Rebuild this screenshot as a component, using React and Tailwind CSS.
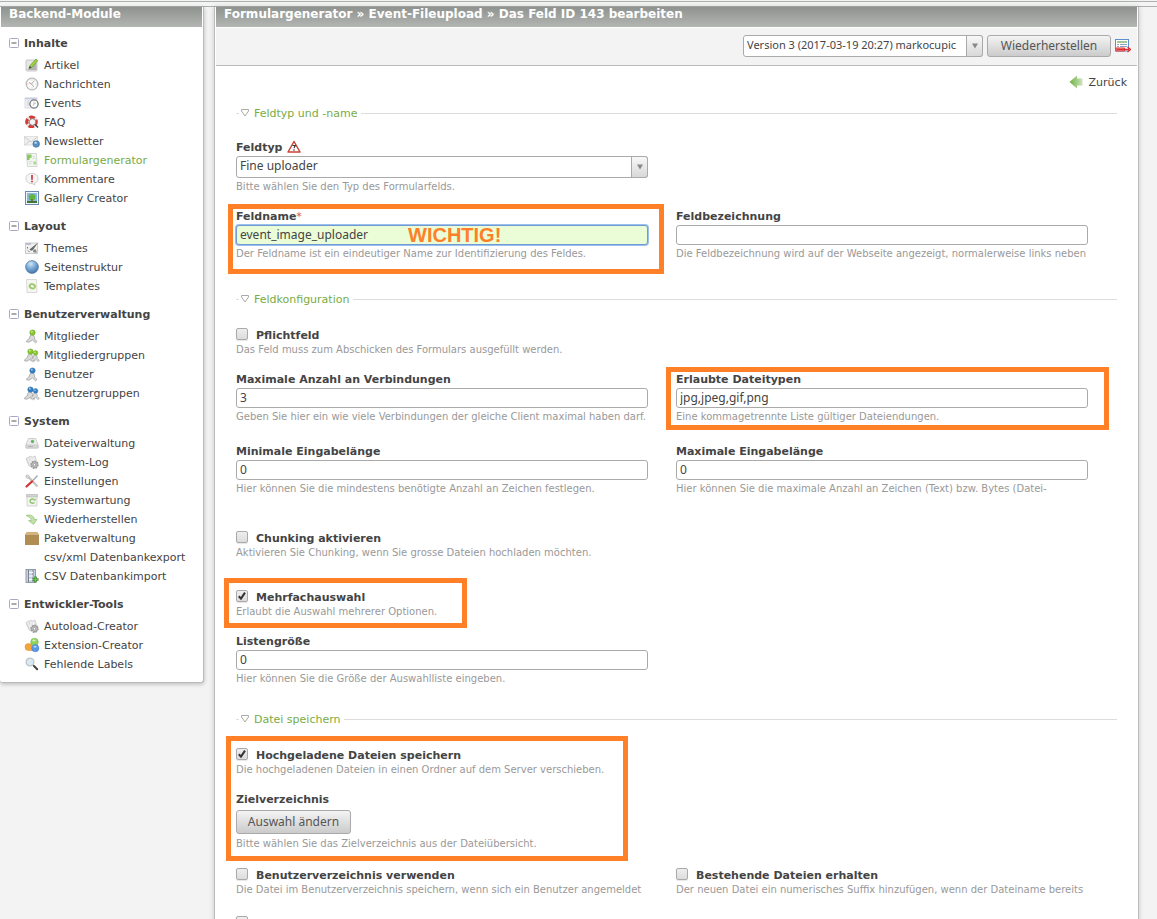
import React from 'react';

function Icon({ children, label }) {
  return (
    <svg viewBox="0 0 16 16" className="h-4 w-4 shrink-0" aria-hidden={label ? undefined : true} aria-label={label}>
      {children}
    </svg>
  );
}

const Person = ({ color, x = 0, dark }) => (
  <g transform={`translate(${x} 0)`}>
    <path d="M8 6.500c2 .5 2.600 2 2.500 4.500l2.500 2.500-1.500 1.300L8.500 12 5 14.200 2.500 13.800c.3-1.800 1.800-2.600 3-3.300C5.600 8.500 6.300 7 8 6.500Z" fill="#dadada" stroke="#9a9a9a" strokeWidth=".7" />
    <circle cx="8.500" cy="4.600" r="2.700" fill={color} stroke={dark} strokeWidth=".5" />
    <circle cx="7.800" cy="3.700" r=".9" fill="#fff" opacity=".6" />
  </g>
);

const Gear = () => (
  <Icon>
    <path d="M2 4.500 7 2l1 1.500L11 2l1.500 5-3 6L5 12Z" fill="#ececec" stroke="#c6c6c6" strokeWidth=".8" />
    <path d="m2.500 5 3 6.500M5 3.500l1 3" stroke="#cfcfcf" strokeWidth=".8" />
    <circle cx="10.500" cy="10.700" r="3.300" fill="#dedede" stroke="#999" strokeWidth="1.800" strokeDasharray="1.700 .8" />
    <circle cx="10.500" cy="10.700" r="2.800" fill="#c9c9c9" stroke="#8c8c8c" strokeWidth=".7" />
    <circle cx="10.500" cy="10.700" r="1.200" fill="#fff" stroke="#777" strokeWidth=".6" />
  </Icon>
);

const icons = {
  artikel: (
    <Icon>
      <rect x="2" y="3" width="11" height="11" rx="1" fill="#e6e6e6" stroke="#bdbdbd" strokeWidth=".8" />
      <path d="M3 13 12.500 5v8Z" fill="#b2b2b2" />
      <path d="m5 11.500 1-3L12 2l1.800 1.500L8 10.200Z" fill="#a0d53c" stroke="#5c8b1d" strokeWidth=".6" />
      <path d="m5 11.500.8-2.400 1.600 1.300Z" fill="#333" />
    </Icon>
  ),
  nachrichten: (
    <Icon>
      <circle cx="8" cy="8" r="5.800" fill="#fbfbfb" stroke="#b9b9b9" strokeWidth="1.300" />
      <path d="M8 3.500v1M8 11.500v1M3.500 8h1M11.500 8h1" stroke="#aaa" strokeWidth=".7" />
      <path d="M10.500 4.500 7.500 8l2.500 3" fill="none" stroke="#9d9d9d" strokeWidth=".8" />
      <path d="m5 6.500 2.500 1.500" stroke="#dc7b70" strokeWidth=".9" />
    </Icon>
  ),
  events: (
    <Icon>
      <rect x="1" y="3" width="12" height="10" fill="#eef0f7" stroke="#d5d8e4" strokeWidth=".8" />
      <path d="M1 3.500h12" stroke="#c6cde2" strokeWidth="1.600" />
      <path d="M3 6h2M3 8h2M3 10h2" stroke="#c4c4c4" strokeWidth=".8" />
      <circle cx="10" cy="9" r="4.100" fill="#fff" stroke="#777" strokeWidth="1.300" />
      <path d="M10 6.500V9l2-1.200M9 11l1-2" fill="none" stroke="#aaa" strokeWidth=".7" />
    </Icon>
  ),
  faq: (
    <Icon>
      <circle cx="7.500" cy="7.800" r="4.700" fill="#fff" stroke="#e8dede" strokeWidth="3.200" />
      <circle cx="7.500" cy="7.800" r="4.700" fill="none" stroke="#d23b35" strokeWidth="3.200" strokeDasharray="5.400 1.983" strokeDashoffset="2.700" />
      <circle cx="8.500" cy="8" r="3.300" fill="#f4f4f4" stroke="#8a8a8a" strokeWidth="1" />
      <path d="m10.800 10.300 3.200 3.200" stroke="#444" strokeWidth="1.600" />
    </Icon>
  ),
  newsletter: (
    <Icon>
      <rect x=".5" y="3.500" width="13" height="8.500" fill="#f0f0f0" stroke="#dadada" strokeWidth=".8" />
      <path d="m.5 4 6.500 5 6.500-5M1 12l4.500-4M13 12 9 8" fill="none" stroke="#c9c9c9" strokeWidth=".9" />
      <circle cx="12.200" cy="11" r="3.300" fill="#568fc0" stroke="#356b9c" strokeWidth=".6" />
      <ellipse cx="11.600" cy="9.700" rx="1.500" ry="1" fill="#b9d8ef" />
    </Icon>
  ),
  formular: (
    <Icon>
      <path d="M2.500 1.500h10l.5 13H3.500Z" fill="#f3f5f1" stroke="#c9cfc5" strokeWidth=".8" />
      <path d="M3 2.500h4.500v3.500H5.500v2H3Z" fill="#8cc765" />
      <path d="M8.500 4.500h2.500M8.500 6.500h3M4.500 9.500h4M4.500 11.500h3" stroke="#d5dfcf" strokeWidth=".9" />
      <path d="M9.500 9.500h2.500v3H9.500Z" fill="#a7d68a" />
    </Icon>
  ),
  kommentare: (
    <Icon>
      <path d="M8 2.500c3.800 0 6 2 6 5 0 2.500-1.500 4-3.500 4.600l.3 2-2.600-1.600C4.500 12.500 2 10.500 2 7.500s2.200-5 6-5Z" fill="#f6f6f6" stroke="#cdcdcd" />
      <path d="M8 4v4.800" stroke="#cf4250" strokeWidth="1.800" />
      <circle cx="8" cy="10.600" r="1" fill="#cf4250" />
    </Icon>
  ),
  gallery: (
    <Icon>
      <rect x="1.500" y="1.500" width="13" height="13" fill="#f0f5fb" stroke="#6c89b0" />
      <rect x="3" y="3" width="10" height="10" fill="#8ab6e3" />
      <path d="M3 11h10v2H3Z" fill="#3f7a2c" />
      <circle cx="8" cy="7.300" r="3.300" fill="#62b53e" />
      <path d="M8 9v3" stroke="#6f5231" strokeWidth="1.200" />
    </Icon>
  ),
  themes: (
    <Icon>
      <rect x="1.500" y="3" width="12" height="10.500" fill="#f0f0f1" stroke="#bfc0c6" strokeWidth=".8" />
      <path d="M2 4h5" stroke="#a9afbf" strokeWidth="1.400" />
      <path d="M3.500 7v1.500M4 10.500l1.500 1.500" stroke="#777" />
      <path d="m5.500 9.500 8.500-7-5 7.500-2 .8Z" fill="#666" />
      <path d="M9 10.500 11.500 9l1.500 3.500H9.500Z" fill="#7f8c83" />
    </Icon>
  ),
  globe: (
    <Icon>
      <defs>
        <radialGradient id="globe" cx=".4" cy=".25" r=".8">
          <stop offset="0" stopColor="#cfe5f6" />
          <stop offset=".5" stopColor="#76a7d3" />
          <stop offset="1" stopColor="#3d6fa3" />
        </radialGradient>
      </defs>
      <circle cx="8" cy="8" r="6.400" fill="url(#globe)" stroke="#48739f" strokeWidth=".7" />
    </Icon>
  ),
  templates: (
    <Icon>
      <path d="M2.500 1.500h10l.5 13H3Z" fill="#f5f6f4" stroke="#d0d2cd" strokeWidth=".8" />
      <ellipse cx="8.300" cy="8.300" rx="2.700" ry="2.100" fill="none" stroke="#9ccb6d" strokeWidth="1.900" transform="rotate(25 8.300 8.300)" />
    </Icon>
  ),
  mitglied: <Icon><Person color="#86c92c" dark="#64971f" /></Icon>,
  mitglieder: (
    <Icon>
      <Person color="#86c92c" dark="#64971f" x={-2} />
      <g transform="translate(3.500 2) scale(.85)"><Person color="#86c92c" dark="#64971f" x={1} /></g>
    </Icon>
  ),
  benutzer: <Icon><Person color="#3480c4" dark="#27629a" /></Icon>,
  benutzergruppe: (
    <Icon>
      <Person color="#3480c4" dark="#27629a" x={-2} />
      <g transform="translate(3.500 2) scale(.85)"><Person color="#3480c4" dark="#27629a" x={1} /></g>
    </Icon>
  ),
  dateien: (
    <Icon>
      <path d="M4.500 3.500h7l2.500 6v3.500H2V9.500Z" fill="#ededed" stroke="#c4c4c4" strokeWidth=".8" />
      <path d="M2 10h12v3H2Z" fill="#d9d9d9" stroke="#bdbdbd" strokeWidth=".6" />
      <circle cx="8.500" cy="6.500" r="1.700" fill="#65b66b" />
      <path d="M4 11.500h5" stroke="#aaa" strokeWidth=".8" />
    </Icon>
  ),
  log: <Gear />,
  tools: (
    <Icon>
      <path d="m3.500 3 10 10.500" stroke="#c4c4c4" strokeWidth="2.400" />
      <path d="M2 2.500 4 2l1.500 2L4 5.500 2 4.500Z" fill="#ddd" stroke="#b2b2b2" strokeWidth=".7" />
      <path d="m13.500 2.500-5 5.500" stroke="#a9a9a9" strokeWidth="1.300" />
      <path d="m8 8.500-5.500 5" stroke="#cf3535" strokeWidth="2.200" strokeLinecap="round" />
    </Icon>
  ),
  wartung: (
    <Icon>
      <path d="M2.500 2.500h11v2.500h-11Z" fill="#d2d6d0" stroke="#b5b8b3" strokeWidth=".7" />
      <path d="M3 5h10v9H3Z" fill="#f1f4ef" stroke="#c6c9c4" strokeWidth=".7" />
      <path d="M10.200 7.500a2.600 2 0 1 0 .3 3" fill="none" stroke="#8dc468" strokeWidth="1.400" />
      <path d="M8.700 8.500h3V6.300Z" fill="#8dc468" />
    </Icon>
  ),
  restore: (
    <Icon>
      <path d="M2 4.500c4-1.300 8 0 8.500 4h2.500l-3.500 5-5-4H7.500C7 7 5 5.800 2 4.500Z" fill="#bfe0a6" stroke="#95c277" strokeWidth=".7" />
    </Icon>
  ),
  paket: (
    <Icon>
      <path d="M2.500 2h11L15 4.500H1Z" fill="#d3b377" />
      <path d="M1 4.500h14V15H1Z" fill="#b08d52" />
    </Icon>
  ),
  leer: <Icon />,
  csv: (
    <Icon>
      <rect x="2" y="1.500" width="9.500" height="13" fill="#c9d2e2" stroke="#7d8797" strokeWidth=".8" />
      <path d="M4.500 2v12M9 2v12" stroke="#6e7686" strokeWidth=".9" />
      <path d="M5 4.500h4M5 8h4M5 11.500h4" stroke="#fff" strokeWidth="1.200" />
      <path d="M11.500 8.500v6M8.500 11.500h6" stroke="#418a31" strokeWidth="2.600" />
      <path d="M11.500 9.200v4.600M9.200 11.500h4.600" stroke="#6cc055" strokeWidth="1.200" />
    </Icon>
  ),
  extension: (
    <Icon>
      <circle cx="10.500" cy="5" r="3.800" fill="#8fd35c" stroke="#6eb13e" strokeWidth=".5" />
      <path d="M4.500 6.500a4 4 0 0 1 4 4v3h-4a3.500 3.500 0 0 1 0-7Z" fill="#f5a63b" stroke="#d98a22" strokeWidth=".5" />
      <circle cx="11.300" cy="11.200" r="3.600" fill="#5a98e6" stroke="#3b78c6" strokeWidth=".5" />
      <ellipse cx="10" cy="3.500" rx="1.700" ry="1" fill="#d6f1c0" />
      <ellipse cx="11" cy="9.700" rx="1.600" ry=".9" fill="#bbd6f7" />
    </Icon>
  ),
  lupe: (
    <Icon>
      <circle cx="6" cy="6" r="3.900" fill="#d9e9f2" stroke="#c0c4c6" strokeWidth="1.300" />
      <path d="m9 9 1.200 1.200" stroke="#999" strokeWidth="1.500" />
      <path d="m10 10 3.200 3.200" stroke="#444" strokeWidth="2" strokeLinecap="round" />
    </Icon>
  ),
};

const groups = [
  ['Inhalte', [['Artikel', 'artikel'], ['Nachrichten', 'nachrichten'], ['Events', 'events'], ['FAQ', 'faq'], ['Newsletter', 'newsletter'], ['Formulargenerator', 'formular'], ['Kommentare', 'kommentare'], ['Gallery Creator', 'gallery']]],
  ['Layout', [['Themes', 'themes'], ['Seitenstruktur', 'globe'], ['Templates', 'templates']]],
  ['Benutzerverwaltung', [['Mitglieder', 'mitglied'], ['Mitgliedergruppen', 'mitglieder'], ['Benutzer', 'benutzer'], ['Benutzergruppen', 'benutzergruppe']]],
  ['System', [['Dateiverwaltung', 'dateien'], ['System-Log', 'log'], ['Einstellungen', 'tools'], ['Systemwartung', 'wartung'], ['Wiederherstellen', 'restore'], ['Paketverwaltung', 'paket'], ['csv/xml Datenbankexport', 'leer'], ['CSV Datenbankimport', 'csv']]],
  ['Entwickler-Tools', [['Autoload-Creator', 'log'], ['Extension-Creator', 'extension'], ['Fehlende Labels', 'lupe']]],
];

function Sidebar() {
  return (
    <aside className="w-51 shrink-0 self-start rounded-b-[3px] border-r border-b border-[#bbb] bg-white pl-px shadow-[0_1px_4px_rgba(0,0,0,0.25)]">
      <h1 className="mr-px h-5 bg-linear-to-b from-[#8f938f] to-[#b3b6b3] pl-2 text-[12px] leading-[14px] font-bold text-white">Backend-Module</h1>
      <nav className="flex flex-col gap-[11px] pt-2 pb-[9px] pl-2">
        {groups.map(([title, items]) => (
          <section key={title}>
            <button type="button" className="flex h-4 items-center gap-[5px] text-[11px] leading-4 font-bold">
              <svg viewBox="0 0 10 10" className="h-2.5 w-2.5" aria-hidden>
                <rect x=".5" y=".5" width="9" height="9" rx="1" fill="#fff" stroke="#aaa9c4" />
                <path d="M2.500 5h5" stroke="#555" />
              </svg>
              <span className="pt-0.5">{title}</span>
            </button>
            <ul className="mt-1">
              {items.map(([name, icon]) => (
                <li key={name}>
                  <a href="#" className={`flex h-[19px] items-center gap-1 pl-[15px] text-[11px] leading-4 whitespace-nowrap ${name === 'Formulargenerator' ? 'text-[#77ac45]' : ''}`}>
                    {icons[icon]}
                    <span className="pt-0.5">{name}</span>
                  </a>
                </li>
              ))}
            </ul>
          </section>
        ))}
      </nav>
    </aside>
  );
}

function Select({ id, value, className, name }) {
  return (
    <div className={`relative h-[22px] ${className}`}>
      <select id={id} aria-label={name} className="block h-full w-full appearance-none rounded-[3px] border border-[#aaa] bg-white pr-4 pb-0.5 pl-[3px] font-['Noto_Sans',sans-serif] leading-4">
        <option>{value}</option>
      </select>
      <span className="pointer-events-none absolute inset-y-0 right-0 flex w-[17px] items-center justify-center rounded-r-[3px] border border-[#aaa] bg-linear-to-b from-[#f8f8f8] to-[#d8d8d8]">
        <svg viewBox="0 0 6 6" className="h-1.5 w-1.5" aria-hidden><path d="M0 .5h6L3 5.500Z" fill="#888" /></svg>
      </span>
    </div>
  );
}

const Hint = ({ children }) => <p className="h-4 text-[10px] leading-4 whitespace-nowrap text-[#999]">{children}</p>;

function Highlight({ className }) {
  return <span aria-hidden className={`pointer-events-none absolute border-5 border-[#ff8027] ${className}`} />;
}

const labelLook = 'h-4 pt-px text-[11px] leading-4 font-bold';

function TextField({ id, label, value = '', hint, required, focused, children }) {
  return (
    <div className="relative mr-7">
      <label htmlFor={id} className={`block ${labelLook}`}>
        {label}{required && <span className="font-normal text-[#c55]">*</span>}
      </label>
      <input
        id={id}
        type="text"
        defaultValue={value}
        className={`my-px block h-5 w-full rounded-[3px] border px-[3px] pb-0.5 font-['Noto_Sans',sans-serif] text-[12px] leading-4 outline-none ${focused ? 'border-[#6f9ad3] bg-[#ebfdd7] ring-1 ring-[#9cc0ee]' : 'border-[#aaa] bg-white'}`}
      />
      <Hint>{hint}</Hint>
      {children}
    </div>
  );
}

function CheckField({ id, label, hint, checked, children }) {
  return (
    <div className="relative mr-7">
      <div className="flex h-[15px] items-start gap-2">
        <span className="relative mt-px h-3 w-3">
          <input id={id} type="checkbox" defaultChecked={checked} className="peer block h-3 w-3 appearance-none rounded-[2px] border border-[#aaa] bg-linear-to-b from-[#eee] to-[#dcdcdc] shadow-[0_1px_1px_rgba(0,0,0,0.1)]" />
          <svg viewBox="0 0 12 12" className="pointer-events-none absolute inset-0 hidden h-3 w-3 peer-checked:block" aria-hidden>
            <path d="m2.800 6.200 2.200 2.400 4-6" fill="none" stroke="#333" strokeWidth="2" />
          </svg>
        </span>
        <label htmlFor={id} className={`whitespace-nowrap ${labelLook}`}>{label}</label>
      </div>
      <Hint>{hint}</Hint>
      {children}
    </div>
  );
}

function Legend({ children }) {
  return (
    <h3 className="-mr-px flex h-4 items-center text-[11px] leading-4 text-[#77ac45]">
      <button type="button" className="flex items-center">
        <span className="h-px w-[3px] bg-[#ddd]" />
        <svg viewBox="0 0 10 10" className="mr-1 ml-px h-2.5 w-2.5" aria-hidden><path d="M1.500 1.500h7v1.500L5 8 1.500 3Z" fill="#fff" stroke="#aaa" /></svg>
        <span className="pt-0.5">{children}</span>
      </button>
      <span className="ml-1 h-px flex-1 bg-[#ddd]" />
    </h3>
  );
}

const buttonLook = "rounded-[3px] border border-[#aaa] bg-linear-to-b from-[#f4f4f4] to-[#cbcbcb] font-['Noto_Sans',sans-serif] text-[12px] leading-4 text-[#555]";

export default function App() {
  return (
    <div className="h-screen overflow-hidden bg-[#f3f3f3] font-['DejaVu_Sans',Verdana,sans-serif] text-[#444]">
      <div className="mt-px h-1.5 border-y border-[#adb0ad] bg-[#f3f4f3]" />
      <div className="flex items-start">
        <Sidebar />
        <main className="mr-[18px] ml-2.5 min-h-screen min-w-0 flex-1 border-x border-[#bbb] bg-white px-px shadow-[0_0_5px_rgba(0,0,0,0.18)]">
          <h1 className="h-5 bg-linear-to-b from-[#8f938f] to-[#b3b6b3] pl-2 text-[12px] leading-[14px] font-bold text-white">
            Formulargenerator » Event-Fileupload » Das Feld ID 143 bearbeiten
          </h1>
          <form className="mt-px flex h-[38px] items-center justify-end gap-1 border-b border-[#bbb] bg-[#f3f3f3] pr-1.5 pb-0.5">
            <Select id="version" name="Version" value="Version 3 (2017-03-19 20:27) markocupic" className="w-60 text-[11px]" />
            <button type="button" className={`h-[22px] w-31 ${buttonLook}`}>Wiederherstellen</button>
            <a href="#" aria-label="Unterschiede anzeigen">
              <Icon>
                <rect x=".5" y="1.500" width="13" height="11.500" fill="#fff" stroke="#5b8fd0" />
                <path d="M2 4h10" stroke="#72ad5c" strokeWidth="1.300" />
                <path d="M2 6.500h2M5 6.500h7M2 8.500h2M5 8.500h7" stroke="#8ea2c0" />
                <path d="M1 10h8.500v3H1Z" fill="#f6b4b4" stroke="#e03131" />
                <path d="M2 11.500h12M12.500 9l3 2.500-3 2.500" fill="none" stroke="#e03131" strokeWidth="1.300" />
              </Icon>
            </a>
          </form>
          <div className="flex justify-end pt-2 pr-2.5">
            <a href="#" className="flex h-4 items-center gap-1 text-[11px] leading-4">
              <svg viewBox="0 0 16 16" className="h-4 w-4" aria-hidden>
                <defs><linearGradient id="back"><stop offset="0" stopColor="#6db33f" /><stop offset="1" stopColor="#cfe2c0" /></linearGradient></defs>
                <path d="M.5 8 8 1.500V4.500h5.500v7H8v3Z" fill="url(#back)" />
              </svg>
              <span className="pt-0.5">Zurück</span>
            </a>
          </div>

          <div className="pt-[15px] pr-[21px] pl-5">
            <Legend>Feldtyp und -name</Legend>
            <div className="mt-[18px] grid grid-cols-2">
              <div className="mr-7">
                <label htmlFor="feldtyp" className={`flex items-center gap-1 ${labelLook}`}>
                  Feldtyp
                  <svg viewBox="0 0 16 16" className="-mt-0.5 h-4 w-4" aria-hidden>
                    <path d="M8 2.500 14 13H2Z" fill="#fff" stroke="#cc4437" strokeWidth="1.500" strokeLinejoin="round" />
                    <path d="M6.500 6.500h2.800L8 9" fill="none" stroke="#333" strokeWidth="1.200" />
                    <circle cx="8" cy="11" r=".8" fill="#333" />
                  </svg>
                </label>
                <Select id="feldtyp" value="Fine uploader" className="my-px text-[12px]" />
                <Hint>Bitte wählen Sie den Typ des Formularfelds.</Hint>
              </div>
            </div>
            <div className="mt-[13px] grid grid-cols-2">
              <TextField id="feldname" label="Feldname" value="event_image_uploader" required focused hint="Der Feldname ist ein eindeutiger Name zur Identifizierung des Feldes.">
                <strong className="pointer-events-none absolute top-4 left-43 font-['Liberation_Sans',sans-serif] text-[20px] leading-[22px] text-[#ff8027]">WICHTIG!</strong>
                <Highlight className="-top-1 -right-4 -bottom-3 -left-2" />
              </TextField>
              <TextField id="bezeichnung" label="Feldbezeichnung" hint="Die Feldbezeichnung wird auf der Webseite angezeigt, normalerweise links neben" />
            </div>

            <div className="mt-[29px]"><Legend>Feldkonfiguration</Legend></div>
            <div className="mt-5">
              <CheckField id="pflicht" label="Pflichtfeld" hint="Das Feld muss zum Abschicken des Formulars ausgefüllt werden." />
            </div>
            <div className="mt-[13px] grid grid-cols-2">
              <TextField id="verbindungen" label="Maximale Anzahl an Verbindungen" value="3" hint="Geben Sie hier ein wie viele Verbindungen der gleiche Client maximal haben darf." />
              <TextField id="typen" label="Erlaubte Dateitypen" value="jpg,jpeg,gif,png" hint="Eine kommagetrennte Liste gültiger Dateiendungen.">
                <Highlight className="-top-1 -right-[21px] -bottom-[5px] -left-2.5" />
              </TextField>
            </div>
            <div className="mt-[18px] grid grid-cols-2">
              <TextField id="min" label="Minimale Eingabelänge" value="0" hint="Hier können Sie die mindestens benötigte Anzahl an Zeichen festlegen." />
              <TextField id="max" label="Maximale Eingabelänge" value="0" hint="Hier können Sie die maximale Anzahl an Zeichen (Text) bzw. Bytes (Datei-" />
            </div>
            <div className="mt-[33px]">
              <CheckField id="chunking" label="Chunking aktivieren" hint="Aktivieren Sie Chunking, wenn Sie grosse Dateien hochladen möchten." />
            </div>
            <div className="mt-7">
              <CheckField id="mehrfach" label="Mehrfachauswahl" checked hint="Erlaubt die Auswahl mehrerer Optionen.">
                <Highlight className="-top-[11px] -bottom-2 -left-3 w-[243px]" />
              </CheckField>
            </div>
            <div className="mt-[13px] grid grid-cols-2">
              <TextField id="liste" label="Listengröße" value="0" hint="Hier können Sie die Größe der Auswahlliste eingeben." />
            </div>

            <div className="mt-6"><Legend>Datei speichern</Legend></div>
            <div className="relative mt-5">
              <CheckField id="speichern" label="Hochgeladene Dateien speichern" checked hint="Die hochgeladenen Dateien in einen Ordner auf dem Server verschieben." />
              <div className="mt-[13px]">
                <label htmlFor="ziel" className={`block ${labelLook}`}>Zielverzeichnis</label>
                <button id="ziel" type="button" className={`mt-[3px] mb-0.5 block h-6 w-[115px] ${buttonLook}`}>Auswahl ändern</button>
                <Hint>Bitte wählen Sie das Zielverzeichnis aus der Dateiübersicht.</Hint>
              </div>
              <Highlight className="-top-[11px] -bottom-[9px] -left-2.5 w-[402px]" />
            </div>
            <div className="mt-[15px] grid grid-cols-2 gap-y-[17px]">
              <CheckField id="benutzer" label="Benutzerverzeichnis verwenden" hint="Die Datei im Benutzerverzeichnis speichern, wenn sich ein Benutzer angemeldet" />
              <CheckField id="erhalten" label="Bestehende Dateien erhalten" hint="Der neuen Datei ein numerisches Suffix hinzufügen, wenn der Dateiname bereits" />
              <CheckField id="hinzu" label="Dateinamen hinzufügen" />
            </div>
          </div>
        </main>
      </div>
    </div>
  );
}
